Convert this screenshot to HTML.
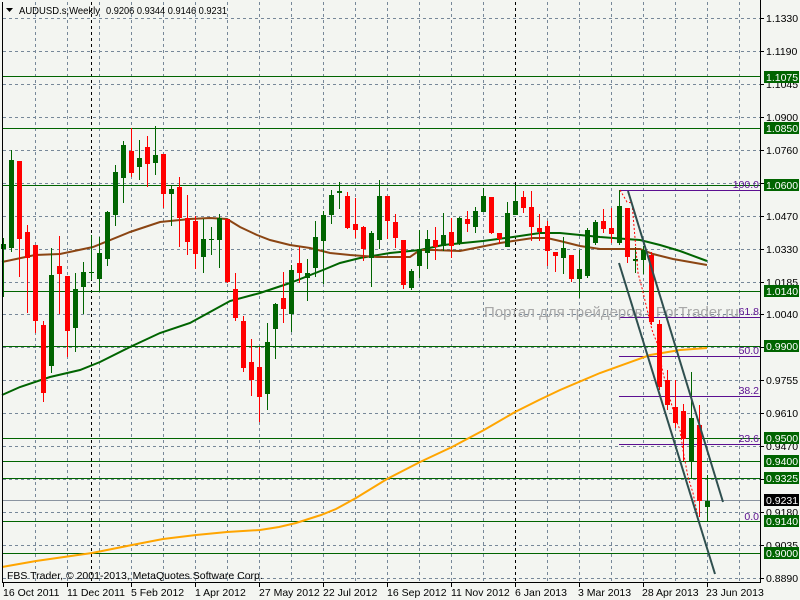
<!DOCTYPE html>
<html><head><meta charset="utf-8"><style>
html,body{margin:0;padding:0;background:#f3f5f1;width:800px;height:600px;overflow:hidden}
svg{display:block}
text{font-family:"Liberation Sans",sans-serif;font-size:10.5px}
.gd{stroke:#778899;stroke-width:1;stroke-dasharray:3,3;fill:none}
.lv{stroke:#006400;stroke-width:1;fill:none}
.fb{stroke:#5b0f91;stroke-width:1;fill:none}
.G rect{fill:#006400}.G line{stroke:#006400}
.R rect{fill:#ff0000}.R line{stroke:#ff0000}
.lab{fill:#000}
.bx{fill:#006400}
.bt{fill:#fff}
</style></head><body>
<svg width="800" height="600" viewBox="0 0 800 600" shape-rendering="crispEdges">
<rect width="800" height="600" fill="#f3f5f1"/>
<g class="gd">
<path d="M3 18.5H760M3 51.5H760M3 84.5H760M3 117.5H760M3 150.5H760M3 183.5H760M3 216.5H760M3 249.5H760M3 282.5H760M3 314.5H760M3 347.5H760M3 380.5H760M3 413.5H760M3 446.5H760M3 479.5H760M3 512.5H760M3 545.5H760M3 578.5H760"/>
<path d="M35.5 2V582M67.5 2V582M99.5 2V582M131.5 2V582M163.5 2V582M195.5 2V582M227.5 2V582M259.5 2V582M291.5 2V582M323.5 2V582M355.5 2V582M387.5 2V582M419.5 2V582M451.5 2V582M483.5 2V582M547.5 2V582M579.5 2V582M611.5 2V582M643.5 2V582M675.5 2V582M707.5 2V582M739.5 2V582"/>
</g>
<path d="M91.5 2V582M515.5 2V582" stroke="#000" stroke-dasharray="3,3"/>
<g class="lv">
<path d="M2 76.5H760M2 128.5H760M2 185.5H760M2 291.5H760M2 346.5H760M2 438.5H760M2 461.5H760M2 478.5H760M2 521.5H760M2 553.5H760"/>
</g>
<path d="M2 500.5H760" stroke="#8a94a0" stroke-width="1"/>
<g class="fb"><path d="M619 190.5H760M619 317.5H760M619 356.5H760M619 396.5H760M619 444.5H760"/></g>
<text x="484" y="317" style="font-size:15px;fill:#a8a8a8">Портал для трейдеров - ForTrader.ru</text>
<rect x="761" y="0" width="39" height="600" fill="#f3f5f1"/>
<g fill="none" stroke-width="2" shape-rendering="auto">
<polyline stroke="#ffa500" points="2,567 36,561 92,553 132,545 163,539 196,535 227,532 260,530 279,527 296,523 321,515 336,509 356,498 387,479 420,462 452,447 484,430 515,412 539,400 560,390 600,373 650,355 680,350 707,348"/>
<polyline stroke="#006400" points="2,395 20,387 50,377 80,370 100,362 130,347 160,333 190,323 210,312 230,301 260,293 290,283 323,270 340,263 360,258 390,253 420,250 443,245 483,241 513,237 540,233 560,233 580,235 600,237 640,240 660,245 680,251 707,261"/>
<polyline stroke="#8b4513" points="2,262 35,255 60,254 93,247 130,232 160,222 190,219 210,218 227,219 240,227 257,235 270,240 290,245 310,248 330,253 350,255 377,257 410,257 420,250 433,250 460,251 480,247 500,243 513,241 533,238 547,238 560,241 580,246 600,249 640,249 653,254 673,259 707,265"/>
</g>
<g id="c">
<g class="G"><line x1="3.5" y1="238" x2="3.5" y2="297"/><rect x="1" y="244" width="5" height="5"/></g>
<g class="G"><line x1="11.5" y1="150" x2="11.5" y2="252"/><rect x="9" y="160" width="5" height="88"/></g>
<g class="R"><line x1="19.5" y1="161" x2="19.5" y2="277"/><rect x="17" y="161" width="5" height="78"/></g>
<g class="R"><line x1="27.5" y1="225" x2="27.5" y2="313"/><rect x="25" y="232" width="5" height="26"/></g>
<g class="R"><line x1="35.5" y1="245" x2="35.5" y2="333"/><rect x="33" y="245" width="5" height="76"/></g>
<g class="R"><line x1="43.5" y1="321" x2="43.5" y2="402"/><rect x="41" y="325" width="5" height="68"/></g>
<g class="G"><line x1="51.5" y1="248" x2="51.5" y2="373"/><rect x="49" y="275" width="5" height="91"/></g>
<g class="R"><line x1="59.5" y1="236" x2="59.5" y2="314"/><rect x="57" y="266" width="5" height="8"/></g>
<g class="R"><line x1="67.5" y1="276" x2="67.5" y2="357"/><rect x="65" y="276" width="5" height="55"/></g>
<g class="G"><line x1="75.5" y1="273" x2="75.5" y2="352"/><rect x="73" y="289" width="5" height="39"/></g>
<g class="G"><line x1="83.5" y1="262" x2="83.5" y2="314"/><rect x="81" y="272" width="5" height="15"/></g>
<g class="G"><line x1="91.5" y1="235" x2="91.5" y2="280"/><rect x="89" y="272" width="5" height="1"/></g>
<g class="G"><line x1="99.5" y1="237" x2="99.5" y2="292"/><rect x="97" y="253" width="5" height="26"/></g>
<g class="G"><line x1="107.5" y1="211" x2="107.5" y2="266"/><rect x="105" y="212" width="5" height="47"/></g>
<g class="G"><line x1="115.5" y1="165" x2="115.5" y2="226"/><rect x="113" y="172" width="5" height="43"/></g>
<g class="G"><line x1="123.5" y1="141" x2="123.5" y2="203"/><rect x="121" y="145" width="5" height="33"/></g>
<g class="R"><line x1="131.5" y1="128" x2="131.5" y2="177"/><rect x="129" y="151" width="5" height="22"/></g>
<g class="G"><line x1="139.5" y1="140" x2="139.5" y2="180"/><rect x="137" y="158" width="5" height="9"/></g>
<g class="R"><line x1="147.5" y1="136" x2="147.5" y2="187"/><rect x="145" y="147" width="5" height="17"/></g>
<g class="G"><line x1="155.5" y1="126" x2="155.5" y2="175"/><rect x="153" y="155" width="5" height="8"/></g>
<g class="R"><line x1="163.5" y1="154" x2="163.5" y2="208"/><rect x="161" y="154" width="5" height="40"/></g>
<g class="G"><line x1="171.5" y1="185" x2="171.5" y2="226"/><rect x="169" y="189" width="5" height="5"/></g>
<g class="R"><line x1="179.5" y1="177" x2="179.5" y2="247"/><rect x="177" y="187" width="5" height="31"/></g>
<g class="R"><line x1="187.5" y1="195" x2="187.5" y2="255"/><rect x="185" y="218" width="5" height="24"/></g>
<g class="R"><line x1="195.5" y1="216" x2="195.5" y2="269"/><rect x="193" y="221" width="5" height="33"/></g>
<g class="G"><line x1="203.5" y1="219" x2="203.5" y2="273"/><rect x="201" y="239" width="5" height="18"/></g>
<g class="G"><line x1="211.5" y1="227" x2="211.5" y2="255"/><rect x="209" y="239" width="5" height="1"/></g>
<g class="G"><line x1="219.5" y1="214" x2="219.5" y2="268"/><rect x="217" y="218" width="5" height="22"/></g>
<g class="R"><line x1="227.5" y1="219" x2="227.5" y2="283"/><rect x="225" y="219" width="5" height="63"/></g>
<g class="R"><line x1="235.5" y1="273" x2="235.5" y2="321"/><rect x="233" y="289" width="5" height="29"/></g>
<g class="R"><line x1="243.5" y1="316" x2="243.5" y2="372"/><rect x="241" y="321" width="5" height="47"/></g>
<g class="R"><line x1="251.5" y1="339" x2="251.5" y2="396"/><rect x="249" y="362" width="5" height="18"/></g>
<g class="R"><line x1="259.5" y1="347" x2="259.5" y2="422"/><rect x="257" y="367" width="5" height="30"/></g>
<g class="G"><line x1="267.5" y1="323" x2="267.5" y2="410"/><rect x="265" y="342" width="5" height="52"/></g>
<g class="G"><line x1="275.5" y1="303" x2="275.5" y2="359"/><rect x="273" y="304" width="5" height="25"/></g>
<g class="R"><line x1="283.5" y1="272" x2="283.5" y2="323"/><rect x="281" y="298" width="5" height="11"/></g>
<g class="G"><line x1="291.5" y1="265" x2="291.5" y2="332"/><rect x="289" y="270" width="5" height="44"/></g>
<g class="R"><line x1="299.5" y1="247" x2="299.5" y2="283"/><rect x="297" y="263" width="5" height="10"/></g>
<g class="G"><line x1="307.5" y1="259" x2="307.5" y2="301"/><rect x="305" y="273" width="5" height="5"/></g>
<g class="G"><line x1="315.5" y1="221" x2="315.5" y2="277"/><rect x="313" y="237" width="5" height="31"/></g>
<g class="G"><line x1="323.5" y1="211" x2="323.5" y2="284"/><rect x="321" y="215" width="5" height="26"/></g>
<g class="G"><line x1="331.5" y1="190" x2="331.5" y2="224"/><rect x="329" y="195" width="5" height="20"/></g>
<g class="G"><line x1="339.5" y1="182" x2="339.5" y2="209"/><rect x="337" y="191" width="5" height="2"/></g>
<g class="R"><line x1="347.5" y1="192" x2="347.5" y2="229"/><rect x="345" y="196" width="5" height="32"/></g>
<g class="R"><line x1="355.5" y1="198" x2="355.5" y2="238"/><rect x="353" y="224" width="5" height="6"/></g>
<g class="R"><line x1="363.5" y1="226" x2="363.5" y2="261"/><rect x="361" y="227" width="5" height="22"/></g>
<g class="G"><line x1="371.5" y1="231" x2="371.5" y2="287"/><rect x="369" y="233" width="5" height="25"/></g>
<g class="G"><line x1="379.5" y1="180" x2="379.5" y2="249"/><rect x="377" y="196" width="5" height="44"/></g>
<g class="R"><line x1="387.5" y1="196" x2="387.5" y2="239"/><rect x="385" y="196" width="5" height="25"/></g>
<g class="R"><line x1="395.5" y1="214" x2="395.5" y2="248"/><rect x="393" y="222" width="5" height="16"/></g>
<g class="R"><line x1="403.5" y1="240" x2="403.5" y2="289"/><rect x="401" y="240" width="5" height="45"/></g>
<g class="G"><line x1="411.5" y1="269" x2="411.5" y2="290"/><rect x="409" y="271" width="5" height="17"/></g>
<g class="G"><line x1="419.5" y1="230" x2="419.5" y2="278"/><rect x="417" y="249" width="5" height="17"/></g>
<g class="G"><line x1="427.5" y1="230" x2="427.5" y2="269"/><rect x="425" y="239" width="5" height="14"/></g>
<g class="R"><line x1="435.5" y1="227" x2="435.5" y2="260"/><rect x="433" y="240" width="5" height="7"/></g>
<g class="G"><line x1="443.5" y1="213" x2="443.5" y2="251"/><rect x="441" y="235" width="5" height="11"/></g>
<g class="R"><line x1="451.5" y1="218" x2="451.5" y2="258"/><rect x="449" y="232" width="5" height="14"/></g>
<g class="G"><line x1="459.5" y1="217" x2="459.5" y2="245"/><rect x="457" y="218" width="5" height="25"/></g>
<g class="R"><line x1="467.5" y1="211" x2="467.5" y2="232"/><rect x="465" y="219" width="5" height="5"/></g>
<g class="G"><line x1="475.5" y1="207" x2="475.5" y2="233"/><rect x="473" y="211" width="5" height="16"/></g>
<g class="G"><line x1="483.5" y1="188" x2="483.5" y2="212"/><rect x="481" y="196" width="5" height="16"/></g>
<g class="R"><line x1="491.5" y1="197" x2="491.5" y2="234"/><rect x="489" y="197" width="5" height="36"/></g>
<g class="R"><line x1="499.5" y1="233" x2="499.5" y2="244"/><rect x="497" y="233" width="5" height="6"/></g>
<g class="G"><line x1="507.5" y1="202" x2="507.5" y2="247"/><rect x="505" y="213" width="5" height="34"/></g>
<g class="G"><line x1="515.5" y1="185" x2="515.5" y2="215"/><rect x="513" y="201" width="5" height="14"/></g>
<g class="R"><line x1="523.5" y1="191" x2="523.5" y2="213"/><rect x="521" y="197" width="5" height="11"/></g>
<g class="R"><line x1="531.5" y1="191" x2="531.5" y2="241"/><rect x="529" y="207" width="5" height="20"/></g>
<g class="R"><line x1="539.5" y1="214" x2="539.5" y2="241"/><rect x="537" y="228" width="5" height="4"/></g>
<g class="R"><line x1="547.5" y1="221" x2="547.5" y2="266"/><rect x="545" y="226" width="5" height="25"/></g>
<g class="R"><line x1="555.5" y1="252" x2="555.5" y2="272"/><rect x="553" y="252" width="5" height="4"/></g>
<g class="G"><line x1="563.5" y1="237" x2="563.5" y2="274"/><rect x="561" y="248" width="5" height="10"/></g>
<g class="R"><line x1="571.5" y1="255" x2="571.5" y2="282"/><rect x="569" y="255" width="5" height="24"/></g>
<g class="G"><line x1="579.5" y1="250" x2="579.5" y2="298"/><rect x="577" y="269" width="5" height="10"/></g>
<g class="G"><line x1="587.5" y1="228" x2="587.5" y2="278"/><rect x="585" y="230" width="5" height="46"/></g>
<g class="G"><line x1="595.5" y1="220" x2="595.5" y2="245"/><rect x="593" y="222" width="5" height="21"/></g>
<g class="R"><line x1="603.5" y1="209" x2="603.5" y2="233"/><rect x="601" y="221" width="5" height="8"/></g>
<g class="R"><line x1="611.5" y1="208" x2="611.5" y2="243"/><rect x="609" y="228" width="5" height="6"/></g>
<g class="G"><line x1="619.5" y1="190" x2="619.5" y2="245"/><rect x="617" y="206" width="5" height="37"/></g>
<g class="R"><line x1="627.5" y1="208" x2="627.5" y2="263"/><rect x="625" y="208" width="5" height="49"/></g>
<g class="G"><line x1="635.5" y1="247" x2="635.5" y2="273"/><rect x="633" y="259" width="5" height="2"/></g>
<g class="G"><line x1="643.5" y1="246" x2="643.5" y2="274"/><rect x="641" y="250" width="5" height="10"/></g>
<g class="R"><line x1="651.5" y1="252" x2="651.5" y2="325"/><rect x="649" y="255" width="5" height="67"/></g>
<g class="R"><line x1="659.5" y1="320" x2="659.5" y2="390"/><rect x="657" y="324" width="5" height="63"/></g>
<g class="R"><line x1="667.5" y1="370" x2="667.5" y2="410"/><rect x="665" y="380" width="5" height="25"/></g>
<g class="R"><line x1="675.5" y1="380" x2="675.5" y2="428"/><rect x="673" y="407" width="5" height="16"/></g>
<g class="R"><line x1="683.5" y1="404" x2="683.5" y2="461"/><rect x="681" y="411" width="5" height="28"/></g>
<g class="G"><line x1="691.5" y1="372" x2="691.5" y2="478"/><rect x="689" y="418" width="5" height="44"/></g>
<g class="R"><line x1="699.5" y1="405" x2="699.5" y2="517"/><rect x="697" y="425" width="5" height="76"/></g>
<g class="G"><line x1="707.5" y1="475" x2="707.5" y2="521"/><rect x="705" y="501" width="5" height="6"/></g>
</g>
<polyline shape-rendering="auto" fill="none" stroke="#ff0000" stroke-width="1" stroke-dasharray="2,2" points="620,190 627,202 632,203 638,273 642,288 652,330 657,343 660,357 663,373 675,417 680,430 683,450 688,477 693,493 698,517"/>
<g shape-rendering="auto" stroke="#2f4f4f" stroke-width="2"><line x1="628" y1="191" x2="723" y2="502"/><line x1="619" y1="263" x2="715" y2="574"/></g>
<g style="fill:#5b0f91;font-size:10px" text-anchor="end">
<text x="759" y="188">100.0</text><text x="759" y="315">61.8</text><text x="759" y="354">50.0</text><text x="759" y="394">38.2</text><text x="759" y="442">23.6</text><text x="759" y="520">0.0</text>
</g>
<path d="M2.5 2V583M2 582.5H761M760.5 0V583" stroke="#000" fill="none"/>
<g stroke="#000"><path d="M761 18.5h3M761 51.5h3M761 84.5h3M761 117.5h3M761 150.5h3M761 183.5h3M761 216.5h3M761 249.5h3M761 282.5h3M761 314.5h3M761 347.5h3M761 380.5h3M761 413.5h3M761 446.5h3M761 479.5h3M761 512.5h3M761 545.5h3M761 578.5h3"/></g>
<g class="lab">
<text x="766" y="22">1.1330</text><text x="766" y="55">1.1190</text><text x="766" y="88">1.1045</text><text x="766" y="121">1.0900</text><text x="766" y="154">1.0760</text><text x="766" y="187">1.0615</text><text x="766" y="220">1.0470</text><text x="766" y="253">1.0330</text><text x="766" y="286">1.0185</text><text x="766" y="318">1.0040</text><text x="766" y="351">0.9900</text><text x="766" y="384">0.9755</text><text x="766" y="417">0.9610</text><text x="766" y="450">0.9470</text><text x="766" y="483">0.9325</text><text x="766" y="516">0.9180</text><text x="766" y="549">0.9035</text><text x="766" y="582">0.8890</text>
</g>
<g class="bx">
<rect x="764" y="71" width="35" height="12"/><rect x="764" y="122" width="35" height="12"/><rect x="764" y="179" width="35" height="12"/><rect x="764" y="285" width="35" height="12"/><rect x="764" y="340" width="35" height="12"/><rect x="764" y="432" width="35" height="12"/><rect x="764" y="455" width="35" height="12"/><rect x="764" y="472" width="35" height="12"/><rect x="764" y="515" width="35" height="12"/><rect x="764" y="547" width="35" height="12"/>
</g>
<rect x="764" y="494" width="35" height="12" fill="#000"/>
<g class="bt">
<text x="766" y="81">1.1075</text><text x="766" y="132">1.0850</text><text x="766" y="189">1.0600</text><text x="766" y="295">1.0140</text><text x="766" y="350">0.9900</text><text x="766" y="442">0.9500</text><text x="766" y="465">0.9400</text><text x="766" y="482">0.9325</text><text x="766" y="504">0.9231</text><text x="766" y="525">0.9140</text><text x="766" y="557">0.9000</text>
</g>
<g stroke="#000"><path d="M3.5 583v4M67.5 583v4M131.5 583v4M195.5 583v4M259.5 583v4M323.5 583v4M387.5 583v4M451.5 583v4M515.5 583v4M579.5 583v4M643.5 583v4M707.5 583v4"/></g>
<g class="lab">
<text x="3" y="596">16 Oct 2011</text><text x="67" y="596">11 Dec 2011</text><text x="131" y="596">5 Feb 2012</text><text x="195" y="596">1 Apr 2012</text><text x="259" y="596">27 May 2012</text><text x="323" y="596">22 Jul 2012</text><text x="387" y="596">16 Sep 2012</text><text x="451" y="596">11 Nov 2012</text><text x="515" y="596">6 Jan 2013</text><text x="578" y="596">3 Mar 2013</text><text x="642" y="596">28 Apr 2013</text><text x="706" y="596">23 Jun 2013</text>
</g>
<text x="7" y="579" fill="#000">FBS Trader, © 2001-2013, MetaQuotes Software Corp.</text>
<path d="M6 8h7l-3.5 4z" fill="#000" shape-rendering="auto"/>
<text x="19" y="14" fill="#000" style="font-size:10.5px" textLength="81" lengthAdjust="spacingAndGlyphs">AUDUSD.s,Weekly</text>
<text x="106" y="14" fill="#000" style="font-size:10.5px" textLength="121" lengthAdjust="spacingAndGlyphs">0.9206 0.9344 0.9146 0.9231</text>
</svg>
</body></html>
